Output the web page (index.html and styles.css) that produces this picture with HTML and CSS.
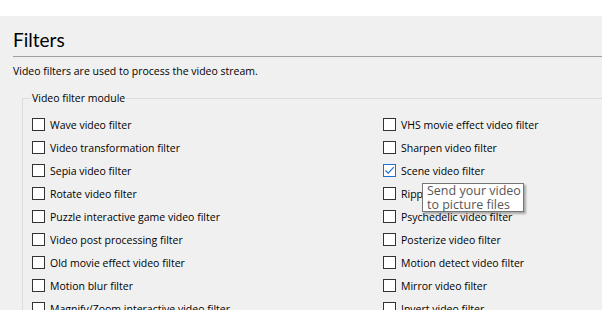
FILE: index.html
```html
<!DOCTYPE html>
<html lang="en">
<head>
    <meta charset="UTF-8">
    <title>Filters</title>
    <link rel="stylesheet" href="styles.css">
</head>
<body>
    <div class="topbar"></div>
    <div class="panel">
        <h2 class="title">Filters</h2>
        <p class="desc">Video filters are used to process the video stream.</p>
        <fieldset class="group">
            <legend>Video filter module</legend>
            <div class="grid">
                <label class="item"><span class="box"></span>Wave video filter</label>
                <label class="item"><span class="box"></span>VHS movie effect video filter</label>
                <label class="item"><span class="box"></span>Video transformation filter</label>
                <label class="item"><span class="box"></span>Sharpen video filter</label>
                <label class="item"><span class="box"></span>Sepia video filter</label>
                <label class="item"><span class="box checked"><svg width="11" height="11" viewBox="0 0 11 11"><path d="M1.5 5.5 L4.2 8.2 L9.8 2.2" fill="none" stroke="#1f6fd1" stroke-width="1.2"/></svg></span>Scene video filter</label>
                <label class="item"><span class="box"></span>Rotate video filter</label>
                <label class="item"><span class="box"></span>Ripple video filter</label>
                <label class="item"><span class="box"></span>Puzzle interactive game video filter</label>
                <label class="item"><span class="box"></span>Psychedelic video filter</label>
                <label class="item"><span class="box"></span>Video post processing filter</label>
                <label class="item"><span class="box"></span>Posterize video filter</label>
                <label class="item"><span class="box"></span>Old movie effect video filter</label>
                <label class="item"><span class="box"></span>Motion detect video filter</label>
                <label class="item"><span class="box"></span>Motion blur filter</label>
                <label class="item"><span class="box"></span>Mirror video filter</label>
                <label class="item"><span class="box"></span>Magnify/Zoom interactive video filter</label>
                <label class="item"><span class="box"></span>Invert video filter</label>
            </div>
        </fieldset>
    </div>
    <div class="tooltip">Send your video<br>to picture files</div>
</body>
</html>
```

FILE: styles.css
```css
body {
    margin: 0;
    background-color: #f0f0f0;
    font-family: "Open Sans", "Liberation Sans", sans-serif;
    font-size: 10.5px;
    color: #000;
    overflow: hidden;
    height: 310px;
}

.topbar {
    height: 16px;
    background-color: #fff;
}

.panel {
    padding-left: 13px;
    width: 700px;
}

.title {
    margin: 0;
    padding-top: 10px;
    height: 30px;
    font-family: Lato, "Open Sans", sans-serif;
    font-size: 19px;
    font-weight: normal;
    line-height: 27px;
    border-bottom: 1px solid #a0a0a0;
}

.desc {
    margin: 0;
    padding-top: 7px;
    line-height: 15px;
}

.group {
    margin: 12px 0 0 9px;
    padding: 7px 0 0 9px;
    border: 1px solid #dcdcdc;
    border-right: none;
    border-bottom: none;
}

.group legend {
    padding: 0 1px;
    margin-left: -1px;
    line-height: 15px;
}

.grid {
    display: grid;
    grid-template-columns: 351px 351px;
    grid-auto-rows: 23px;
}

.item {
    display: flex;
    align-items: center;
    gap: 5px;
}

.box {
    width: 11px;
    height: 11px;
    border: 1px solid #333;
    background-color: #fff;
    display: flex;
}

.box.checked {
    border-color: #1f6fd1;
}

.tooltip {
    position: absolute;
    left: 422px;
    top: 183px;
    width: 96px;
    height: 27px;
    padding: 0 0 0 4px;
    border: 1px solid #767676;
    background-color: #fff;
    color: #575757;
    font-size: 12.5px;
    line-height: 13.5px;
    box-shadow: 2px 2px 2px rgba(0, 0, 0, 0.3);
}
```
